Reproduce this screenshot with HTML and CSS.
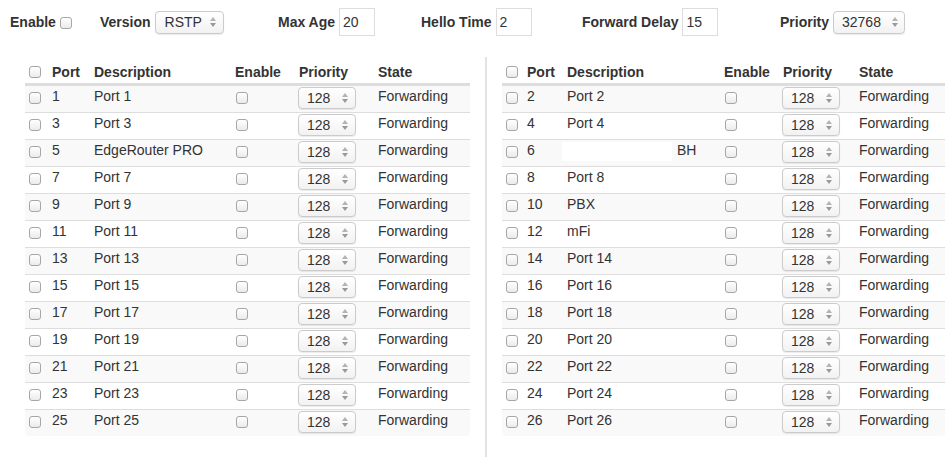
FILE: index.html
```html
<!DOCTYPE html>
<html lang="en">
<head>
  <meta charset="UTF-8" />
  <meta name="viewport" content="width=device-width, initial-scale=1" />
  <title>Spanning Tree</title>
  <link rel="stylesheet" href="styles.css">
</head>
<body>
  <div class="settings">
    <div class="field"><label>Enable</label><input type="checkbox" /></div>
    <div class="field"><label>Version</label><span class="select select-version">RSTP<i class="spin"></i></span></div>
    <div class="field"><label>Max Age</label><input type="text" value="20" /></div>
    <div class="field"><label>Hello Time</label><input type="text" value="2" /></div>
    <div class="field"><label>Forward Delay</label><input type="text" value="15" /></div>
    <div class="field"><label>Priority</label><span class="select select-bridge">32768<i class="spin"></i></span></div>
  </div>

  <div class="ports">
    <div class="panel panel-left">
      <table class="port-table">
        <colgroup>
          <col class="col-check"><col class="col-port"><col class="col-desc"><col class="col-enable"><col class="col-prio"><col class="col-state">
        </colgroup>
        <thead>
          <tr><th><input type="checkbox" /></th><th>Port</th><th>Description</th><th>Enable</th><th>Priority</th><th>State</th></tr>
        </thead>
        <tbody>
          <tr><td><input type="checkbox" /></td><td>1</td><td>Port 1</td><td><input type="checkbox" /></td><td><span class="select">128<i class="spin"></i></span></td><td>Forwarding</td></tr>
          <tr><td><input type="checkbox" /></td><td>3</td><td>Port 3</td><td><input type="checkbox" /></td><td><span class="select">128<i class="spin"></i></span></td><td>Forwarding</td></tr>
          <tr><td><input type="checkbox" /></td><td>5</td><td>EdgeRouter PRO</td><td><input type="checkbox" /></td><td><span class="select">128<i class="spin"></i></span></td><td>Forwarding</td></tr>
          <tr><td><input type="checkbox" /></td><td>7</td><td>Port 7</td><td><input type="checkbox" /></td><td><span class="select">128<i class="spin"></i></span></td><td>Forwarding</td></tr>
          <tr><td><input type="checkbox" /></td><td>9</td><td>Port 9</td><td><input type="checkbox" /></td><td><span class="select">128<i class="spin"></i></span></td><td>Forwarding</td></tr>
          <tr><td><input type="checkbox" /></td><td>11</td><td>Port 11</td><td><input type="checkbox" /></td><td><span class="select">128<i class="spin"></i></span></td><td>Forwarding</td></tr>
          <tr><td><input type="checkbox" /></td><td>13</td><td>Port 13</td><td><input type="checkbox" /></td><td><span class="select">128<i class="spin"></i></span></td><td>Forwarding</td></tr>
          <tr><td><input type="checkbox" /></td><td>15</td><td>Port 15</td><td><input type="checkbox" /></td><td><span class="select">128<i class="spin"></i></span></td><td>Forwarding</td></tr>
          <tr><td><input type="checkbox" /></td><td>17</td><td>Port 17</td><td><input type="checkbox" /></td><td><span class="select">128<i class="spin"></i></span></td><td>Forwarding</td></tr>
          <tr><td><input type="checkbox" /></td><td>19</td><td>Port 19</td><td><input type="checkbox" /></td><td><span class="select">128<i class="spin"></i></span></td><td>Forwarding</td></tr>
          <tr><td><input type="checkbox" /></td><td>21</td><td>Port 21</td><td><input type="checkbox" /></td><td><span class="select">128<i class="spin"></i></span></td><td>Forwarding</td></tr>
          <tr><td><input type="checkbox" /></td><td>23</td><td>Port 23</td><td><input type="checkbox" /></td><td><span class="select">128<i class="spin"></i></span></td><td>Forwarding</td></tr>
          <tr><td><input type="checkbox" /></td><td>25</td><td>Port 25</td><td><input type="checkbox" /></td><td><span class="select">128<i class="spin"></i></span></td><td>Forwarding</td></tr>
        </tbody>
      </table>
    </div>

    <div class="panel panel-right">
      <table class="port-table">
        <colgroup>
          <col class="col-check"><col class="col-port"><col class="col-desc"><col class="col-enable"><col class="col-prio"><col class="col-state">
        </colgroup>
        <thead>
          <tr><th><input type="checkbox" /></th><th>Port</th><th>Description</th><th>Enable</th><th>Priority</th><th>State</th></tr>
        </thead>
        <tbody>
          <tr><td><input type="checkbox" /></td><td>2</td><td>Port 2</td><td><input type="checkbox" /></td><td><span class="select">128<i class="spin"></i></span></td><td>Forwarding</td></tr>
          <tr><td><input type="checkbox" /></td><td>4</td><td>Port 4</td><td><input type="checkbox" /></td><td><span class="select">128<i class="spin"></i></span></td><td>Forwarding</td></tr>
          <tr><td><input type="checkbox" /></td><td>6</td><td><span class="blank"></span>BH</td><td><input type="checkbox" /></td><td><span class="select">128<i class="spin"></i></span></td><td>Forwarding</td></tr>
          <tr><td><input type="checkbox" /></td><td>8</td><td>Port 8</td><td><input type="checkbox" /></td><td><span class="select">128<i class="spin"></i></span></td><td>Forwarding</td></tr>
          <tr><td><input type="checkbox" /></td><td>10</td><td>PBX</td><td><input type="checkbox" /></td><td><span class="select">128<i class="spin"></i></span></td><td>Forwarding</td></tr>
          <tr><td><input type="checkbox" /></td><td>12</td><td>mFi</td><td><input type="checkbox" /></td><td><span class="select">128<i class="spin"></i></span></td><td>Forwarding</td></tr>
          <tr><td><input type="checkbox" /></td><td>14</td><td>Port 14</td><td><input type="checkbox" /></td><td><span class="select">128<i class="spin"></i></span></td><td>Forwarding</td></tr>
          <tr><td><input type="checkbox" /></td><td>16</td><td>Port 16</td><td><input type="checkbox" /></td><td><span class="select">128<i class="spin"></i></span></td><td>Forwarding</td></tr>
          <tr><td><input type="checkbox" /></td><td>18</td><td>Port 18</td><td><input type="checkbox" /></td><td><span class="select">128<i class="spin"></i></span></td><td>Forwarding</td></tr>
          <tr><td><input type="checkbox" /></td><td>20</td><td>Port 20</td><td><input type="checkbox" /></td><td><span class="select">128<i class="spin"></i></span></td><td>Forwarding</td></tr>
          <tr><td><input type="checkbox" /></td><td>22</td><td>Port 22</td><td><input type="checkbox" /></td><td><span class="select">128<i class="spin"></i></span></td><td>Forwarding</td></tr>
          <tr><td><input type="checkbox" /></td><td>24</td><td>Port 24</td><td><input type="checkbox" /></td><td><span class="select">128<i class="spin"></i></span></td><td>Forwarding</td></tr>
          <tr><td><input type="checkbox" /></td><td>26</td><td>Port 26</td><td><input type="checkbox" /></td><td><span class="select">128<i class="spin"></i></span></td><td>Forwarding</td></tr>
        </tbody>
      </table>
    </div>
  </div>
</body>
</html>
```

FILE: styles.css
```css
body {
  font-family: "Liberation Sans", Arial, sans-serif;
  font-size: 14px;
  color: #333;
  background: #fff;
  margin: 0;
}

/* top bar */
.settings {
  display: grid;
  grid-template-columns: 90px 178px 143px 161px 198px auto;
  align-items: center;
  height: 28px;
  padding: 8px 0 0 10px;
}
.field {
  display: flex;
  align-items: center;
  gap: 4px;
}
.field label {
  font-weight: bold;
}
.field input[type="text"] {
  width: 36px;
  height: 28px;
  box-sizing: border-box;
  border: 1px solid #ddd;
  padding: 0 3px;
  font: inherit;
  color: #333;
  outline: none;
}

input[type="checkbox"] {
  appearance: none;
  -webkit-appearance: none;
  width: 12px;
  height: 12px;
  margin: 0;
  border: 1px solid #a6a6a6;
  border-radius: 3px;
  background: linear-gradient(#fff, #ebebeb);
  box-shadow: inset 0 1px 1px rgba(255,255,255,0.8);
}
.field input[type="checkbox"] {
  margin-top: 1px;
}

/* select look-alike */
.select {
  display: inline-flex;
  align-items: center;
  justify-content: space-between;
  box-sizing: border-box;
  width: 58px;
  height: 22px;
  padding: 0 7px 0 8px;
  line-height: 20px;
  border: 1px solid #cbcbcb;
  border-radius: 4px;
  background: linear-gradient(#fff, #f2f2f2);
  box-shadow: 0 1px 1px rgba(0,0,0,0.08);
}
.select-version {
  width: 69px;
  height: 23px;
  padding-left: 9px;
}
.select-bridge {
  width: 72px;
  height: 23px;
  padding-right: 6px;
}
.spin {
  display: flex;
  flex-direction: column;
  gap: 2px;
}
.spin::before,
.spin::after {
  content: "";
  border-left: 3px solid transparent;
  border-right: 3px solid transparent;
}
.spin::before {
  border-bottom: 4px solid #b3b3b3;
}
.spin::after {
  border-top: 4px solid #999;
}

/* port tables */
.ports {
  display: flex;
  margin-top: 21px;
}
.panel {
  padding: 1px 15px 21px 25px;
  width: 445px;
}
.panel-right {
  border-left: 2px solid #e3e3e3;
  padding: 1px 5px 21px 15px;
  width: 443px;
}
.port-table {
  width: 100%;
  table-layout: fixed;
  border-collapse: separate;
  border-spacing: 0;
}
.port-table th {
  text-align: left;
  font-weight: bold;
  line-height: 20px;
  padding: 4px 4px 1px;
  vertical-align: bottom;
  border-bottom: 2px solid #ddd;
  white-space: nowrap;
}
.port-table td {
  height: 26px;
  line-height: 20px;
  padding: 0 4px;
  vertical-align: top;
  border-top: 1px solid #ddd;
  white-space: nowrap;
}
.port-table tbody tr:nth-child(odd) td {
  background: #f9f9f9;
}
.port-table tbody tr:last-child td:first-child {
  border-bottom-left-radius: 4px;
}
.port-table tbody tr:last-child td:last-child {
  border-bottom-right-radius: 4px;
}
.port-table input[type="checkbox"] {
  display: block;
  margin-top: 6px;
}
.port-table th input[type="checkbox"] {
  margin: 0 0 4px;
}
.port-table td:nth-child(4) input[type="checkbox"] {
  margin-left: 1px;
}
.port-table .select {
  margin: 1px 0 0 -1px;
}
.blank {
  display: inline-block;
  vertical-align: top;
  width: 110px;
  height: 19px;
  margin: 2px 5px 0 -5px;
  background: #fff;
}

.panel-left .col-check { width: 23px; }
.panel-left .col-port { width: 42px; }
.panel-left .col-desc { width: 141px; }
.panel-left .col-enable { width: 64px; }
.panel-left .col-prio { width: 79px; }
.panel-left .col-state { width: 96px; }

.panel-right .col-check { width: 21px; }
.panel-right .col-port { width: 40px; }
.panel-right .col-desc { width: 157px; }
.panel-right .col-enable { width: 59px; }
.panel-right .col-prio { width: 76px; }
.panel-right .col-state { width: 90px; }
```
